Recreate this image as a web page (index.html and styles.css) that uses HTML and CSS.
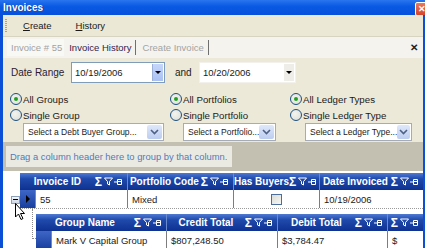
FILE: index.html
```html
<!DOCTYPE html>
<html lang="en">
<head>
    <meta charset="UTF-8">
    <title>Invoices</title>
    <link rel="stylesheet" href="styles.css">
</head>
<body>
<div class="window">
    <div class="top-strip"></div>
    <div class="titlebar">
        <span class="title">Invoices</span>
        <span class="close-btn">&#x2715;</span>
    </div>

    <div class="frame">
        <div class="menubar">
            <span class="grip"></span>
            <span class="menu-item"><u>C</u>reate</span>
            <span class="menu-item"><u>H</u>istory</span>
        </div>

        <div class="tabstrip">
            <span class="tab tab-off tab-first">Invoice # 55</span>
            <span class="tab tab-on">Invoice History</span>
            <span class="tab-sep"></span>
            <span class="tab tab-off tab-create">Create Invoice</span>
            <span class="tab-sep"></span>
            <span class="tab-close">&#x2715;</span>
        </div>

        <div class="filters">
            <div class="date-row">
                <span class="date-label">Date Range</span>
                <div class="date-box date-first">
                    <span class="date-text">10/19/2006</span>
                    <span class="date-drop"><span class="arrow-down"></span></span>
                </div>
                <span class="and">and</span>
                <div class="date-box date-second">
                    <span class="date-text">10/20/2006</span>
                    <span class="date-drop plain"><span class="arrow-down"></span></span>
                </div>
            </div>

            <div class="options">
                <div class="opt-col col-groups">
                    <div class="radio-row"><span class="radio checked"></span>All Groups</div>
                    <div class="radio-row"><span class="radio"></span>Single Group</div>
                    <div class="combo combo-groups"><span class="combo-text">Select a Debt Buyer Group...</span><span class="combo-btn"><svg width="9" height="6" viewBox="0 0 9 6"><path d="M1 1 L4.5 4.5 L8 1" fill="none" stroke="#4d6185" stroke-width="1.6"/></svg></span></div>
                </div>
                <div class="opt-col col-portfolios">
                    <div class="radio-row"><span class="radio checked"></span>All Portfolios</div>
                    <div class="radio-row"><span class="radio"></span>Single Portfolio</div>
                    <div class="combo combo-portfolios"><span class="combo-text">Select a Portfolio...</span><span class="combo-btn"><svg width="9" height="6" viewBox="0 0 9 6"><path d="M1 1 L4.5 4.5 L8 1" fill="none" stroke="#4d6185" stroke-width="1.6"/></svg></span></div>
                </div>
                <div class="opt-col col-ledger">
                    <div class="radio-row"><span class="radio checked"></span>All Ledger Types</div>
                    <div class="radio-row"><span class="radio"></span>Single Ledger Type</div>
                    <div class="combo combo-ledger"><span class="combo-text">Select a Ledger Type...</span><span class="combo-btn"><svg width="9" height="6" viewBox="0 0 9 6"><path d="M1 1 L4.5 4.5 L8 1" fill="none" stroke="#4d6185" stroke-width="1.6"/></svg></span></div>
                </div>
            </div>
        </div>

        <div class="groupby">
            <div class="groupby-box">Drag a column header here to group by that column.</div>
        </div>

        <div class="grid-area">
            <div class="band band-main">
                <div class="head-row">
                    <div class="hcell" style="width:108px"><span class="htext">Invoice ID</span><span class="hicons"><span class="sigma">&Sigma;</span><svg class="ficon" width="9" height="9" viewBox="0 0 9 9"><path d="M0.5 1 H8.5 L5.5 4.5 V8 L3.5 7 V4.5 Z" fill="none" stroke="#fff" stroke-width="1"/></svg><svg class="picon" width="8" height="8" viewBox="0 0 8 8"><path d="M0 4 H3 M3.5 1.5 H7.5 V6.5 H3.5 Z M3.5 3.5 H7.5" fill="none" stroke="#fff" stroke-width="1"/></svg></span></div>
                    <div class="hcell" style="width:106px"><span class="htext">Portfolio Code</span><span class="hicons"><span class="sigma">&Sigma;</span><svg class="ficon" width="9" height="9" viewBox="0 0 9 9"><path d="M0.5 1 H8.5 L5.5 4.5 V8 L3.5 7 V4.5 Z" fill="none" stroke="#fff" stroke-width="1"/></svg><svg class="picon" width="8" height="8" viewBox="0 0 8 8"><path d="M0 4 H3 M3.5 1.5 H7.5 V6.5 H3.5 Z M3.5 3.5 H7.5" fill="none" stroke="#fff" stroke-width="1"/></svg></span></div>
                    <div class="hcell" style="width:86px"><span class="htext">Has Buyers</span><span class="hicons"><span class="sigma">&Sigma;</span><svg class="ficon" width="9" height="9" viewBox="0 0 9 9"><path d="M0.5 1 H8.5 L5.5 4.5 V8 L3.5 7 V4.5 Z" fill="none" stroke="#fff" stroke-width="1"/></svg><svg class="picon" width="8" height="8" viewBox="0 0 8 8"><path d="M0 4 H3 M3.5 1.5 H7.5 V6.5 H3.5 Z M3.5 3.5 H7.5" fill="none" stroke="#fff" stroke-width="1"/></svg></span></div>
                    <div class="hcell last" style="width:103px"><span class="htext">Date Invoiced</span><span class="hicons"><span class="sigma">&Sigma;</span><svg class="ficon" width="9" height="9" viewBox="0 0 9 9"><path d="M0.5 1 H8.5 L5.5 4.5 V8 L3.5 7 V4.5 Z" fill="none" stroke="#fff" stroke-width="1"/></svg><svg class="picon" width="8" height="8" viewBox="0 0 8 8"><path d="M0 4 H3 M3.5 1.5 H7.5 V6.5 H3.5 Z M3.5 3.5 H7.5" fill="none" stroke="#fff" stroke-width="1"/></svg></span></div>
                </div>
                <div class="data-row">
                    <div class="selector"><span class="arrow-right"></span></div>
                    <div class="dcell" style="width:92px">55</div>
                    <div class="dcell" style="width:106px">Mixed</div>
                    <div class="dcell center" style="width:86px"><span class="checkbox"></span></div>
                    <div class="dcell last" style="width:103px">10/19/2006</div>
                </div>

                <span class="expander"></span>
                <span class="tree-line"></span>
                <svg class="cursor" width="11" height="18" viewBox="0 0 11 18"><path d="M0.5 0.5 V14 L3.5 11 L6 16.5 L8 15.5 L5.5 10.5 H9.5 Z" fill="#fff" stroke="#000" stroke-width="1"/></svg>
            </div>

            <div class="band band-child">
                <div class="head-row">
                    <div class="hcell" style="width:131px"><span class="htext">Group Name</span><span class="hicons"><span class="sigma">&Sigma;</span><svg class="ficon" width="9" height="9" viewBox="0 0 9 9"><path d="M0.5 1 H8.5 L5.5 4.5 V8 L3.5 7 V4.5 Z" fill="none" stroke="#fff" stroke-width="1"/></svg><svg class="picon" width="8" height="8" viewBox="0 0 8 8"><path d="M0 4 H3 M3.5 1.5 H7.5 V6.5 H3.5 Z M3.5 3.5 H7.5" fill="none" stroke="#fff" stroke-width="1"/></svg></span></div>
                    <div class="hcell" style="width:111px"><span class="htext">Credit Total</span><span class="hicons"><span class="sigma">&Sigma;</span><svg class="ficon" width="9" height="9" viewBox="0 0 9 9"><path d="M0.5 1 H8.5 L5.5 4.5 V8 L3.5 7 V4.5 Z" fill="none" stroke="#fff" stroke-width="1"/></svg><svg class="picon" width="8" height="8" viewBox="0 0 8 8"><path d="M0 4 H3 M3.5 1.5 H7.5 V6.5 H3.5 Z M3.5 3.5 H7.5" fill="none" stroke="#fff" stroke-width="1"/></svg></span></div>
                    <div class="hcell" style="width:110px"><span class="htext">Debit Total</span><span class="hicons"><span class="sigma">&Sigma;</span><svg class="ficon" width="9" height="9" viewBox="0 0 9 9"><path d="M0.5 1 H8.5 L5.5 4.5 V8 L3.5 7 V4.5 Z" fill="none" stroke="#fff" stroke-width="1"/></svg><svg class="picon" width="8" height="8" viewBox="0 0 8 8"><path d="M0 4 H3 M3.5 1.5 H7.5 V6.5 H3.5 Z M3.5 3.5 H7.5" fill="none" stroke="#fff" stroke-width="1"/></svg></span></div>
                    <div class="hcell last" style="width:35px"><span class="htext"></span><span class="hicons"><span class="sigma">&Sigma;</span><svg class="ficon" width="9" height="9" viewBox="0 0 9 9"><path d="M0.5 1 H8.5 L5.5 4.5 V8 L3.5 7 V4.5 Z" fill="none" stroke="#fff" stroke-width="1"/></svg><svg class="picon" width="8" height="8" viewBox="0 0 8 8"><path d="M0 4 H3 M3.5 1.5 H7.5 V6.5 H3.5 Z M3.5 3.5 H7.5" fill="none" stroke="#fff" stroke-width="1"/></svg></span></div>
                </div>
                <div class="data-row">
                    <div class="selector"></div>
                    <div class="dcell" style="width:115px">Mark V Capital Group</div>
                    <div class="dcell" style="width:111px">$807,248.50</div>
                    <div class="dcell" style="width:110px">$3,784.47</div>
                    <div class="dcell last" style="width:35px">$</div>
                </div>
            </div>
        </div>
    </div>
</div>
</body>
</html>
```

FILE: styles.css
```css
body {
    margin: 0;
    padding: 0;
    font-family: "Liberation Sans", Arial, sans-serif;
    font-size: 10px;
    color: #1a1a1a;
    background-color: #ece9d8;
}

.window {
    width: 425px;
    height: 248px;
    overflow: hidden;
    display: flex;
    flex-direction: column;
}

.top-strip {
    height: 2px;
    background-color: #e4e9f2;
}

/* XP style caption */
.titlebar {
    height: 15px;
    display: flex;
    align-items: center;
    justify-content: space-between;
    background: linear-gradient(#2a76ee, #0a5ae4 40%, #0650dc);
    color: white;
}

.title {
    font-weight: bold;
    font-size: 10px;
    padding-left: 3px;
    text-shadow: 1px 0 0 #0a3a9a;
}

.close-btn {
    width: 12px;
    height: 12px;
    margin-right: -4px;
    margin-top: 3px;
    border: 1px solid #fff;
    border-radius: 2px;
    background: linear-gradient(#e8795b, #d5452a);
    color: white;
    font-size: 9px;
    font-weight: bold;
    line-height: 12px;
    text-align: center;
}

.frame {
    flex: 1;
    display: flex;
    flex-direction: column;
    border-left: 3px solid #0b4fd6;
    border-right: 2px solid #0b4fd6;
    background-color: #ece9d8;
}

.menubar {
    height: 21px;
    display: flex;
    align-items: center;
    background-color: #ebe8d6;
    border-bottom: 1px solid #d8d4c2;
    font-size: 9.5px;
}

.grip {
    width: 2px;
    height: 13px;
    margin-left: 2px;
    margin-right: 16px;
    background: repeating-linear-gradient(#a8a594 0 1px, transparent 1px 2px);
}

.menu-item {
    margin-right: 24px;
}

.tabstrip {
    height: 21px;
    display: flex;
    align-items: center;
    background-color: #f4f3ee;
    font-size: 9.5px;
}

.tab {
    padding: 0 3px;
}

.tab-first {
    margin-left: 4px;
    padding: 3px 2px 3px 4px;
    background-color: #f8f8f5;
}

.tab-off {
    color: #a3a3a3;
}

.tab-on {
    color: #3a1a48;
    padding-left: 5px;
    padding-right: 3px;
}

.tab-create {
    padding-left: 5px;
    padding-right: 4px;
}

.tab-sep {
    width: 1px;
    height: 15px;
    background-color: #6f6f6f;
    margin: 0 2px 0 0;
}

.tab-close {
    margin-left: auto;
    margin-right: 5px;
    font-size: 10px;
    font-weight: bold;
    color: #222;
}

.filters {
    padding: 4px 0 0 0;
}

.date-row {
    display: flex;
    align-items: center;
    height: 21px;
    font-size: 10px;
}

.date-label {
    width: 60px;
    padding-left: 8px;
    color: #2b1a30;
}

.date-box {
    height: 19px;
    display: flex;
    align-items: center;
    justify-content: space-between;
    background-color: white;
    font-size: 9.5px;
}

.date-first {
    width: 92px;
    border: 1px solid #7f9db9;
}

.date-second {
    width: 95px;
    border: 1px solid #f2f1ec;
}

.date-text {
    padding-left: 3px;
}

.date-drop {
    width: 10px;
    height: 17px;
    margin-right: 1px;
    display: flex;
    align-items: center;
    justify-content: center;
    background: linear-gradient(#c6d6fb, #a9c1f2);
    border-left: 1px solid #9db0d8;
}

.date-drop.plain {
    background: #eeede8;
    border-left: none;
}

.arrow-down {
    width: 0;
    height: 0;
    border-left: 3px solid transparent;
    border-right: 3px solid transparent;
    border-top: 3px solid #000;
}

.and {
    width: 24px;
    padding-left: 10px;
}

.options {
    display: grid;
    grid-template-columns: 160px 120px 1fr;
    margin-top: 8px;
    padding-left: 7px;
}

.radio-row {
    height: 16px;
    display: flex;
    align-items: center;
    font-size: 9.7px;
}

.radio {
    width: 10px;
    height: 10px;
    border: 1px solid #1c5180;
    border-radius: 50%;
    background: radial-gradient(circle at 40% 40%, #f4f4f0, #dcdcd4);
    margin-right: 1px;
    position: relative;
}

.radio.checked::after {
    content: "";
    position: absolute;
    left: 3px;
    top: 3px;
    width: 4px;
    height: 4px;
    border-radius: 50%;
    background-color: #21a121;
}

.combo {
    height: 16px;
    display: flex;
    align-items: center;
    justify-content: space-between;
    border: 1px solid #a5acb5;
    background-color: white;
    font-size: 8.5px;
}

.combo-groups {
    width: 139px;
    margin-left: 13px;
}

.combo-portfolios {
    width: 91px;
    margin-left: 13px;
}

.combo-ledger {
    width: 105px;
    margin-left: 15px;
}

.combo-text {
    padding-left: 4px;
    white-space: nowrap;
}

.combo-btn {
    width: 15px;
    height: 14px;
    margin-right: 1px;
    display: flex;
    align-items: center;
    justify-content: center;
    background: linear-gradient(#dfe8fb, #bccdef);
    border-radius: 2px;
}

.groupby {
    margin-top: 1px;
    height: 29px;
    background-color: #c4c0b1;
    display: flex;
    align-items: center;
}

.groupby-box {
    margin-left: 3px;
    width: 222px;
    height: 21px;
    line-height: 21px;
    padding-left: 4px;
    background-color: #ebeae2;
    color: #5479b9;
    font-size: 9.4px;
    white-space: nowrap;
}

.grid-area {
    flex: 1;
    background-color: white;
    padding-top: 2px;
}

.band {
    position: relative;
}

.band-main {
    margin-left: 17px;
}

.band-child {
    margin-left: 33px;
    margin-top: 5px;
}

.head-row {
    display: flex;
    height: 17px;
}

.hcell {
    display: flex;
    align-items: center;
    background: linear-gradient(#5079d2, #1f4aac 35%, #0e3191);
    border-right: 1px solid #6a8ad0;
    box-sizing: border-box;
    color: white;
    font-weight: bold;
    font-size: 10px;
}

.hcell.last {
    border-right: none;
}

.htext {
    flex: 1;
    text-align: center;
    white-space: nowrap;
}

.hicons {
    display: flex;
    align-items: center;
    gap: 1px;
    padding-right: 5px;
}

.sigma {
    font-size: 12px;
    line-height: 12px;
    margin-right: 1px;
}

.data-row {
    display: flex;
    height: 18px;
    border-bottom: 1px dotted #9a9a9a;
}

.selector {
    width: 16px;
    display: flex;
    align-items: center;
    justify-content: center;
    background: linear-gradient(#3e66c6, #183f9e);
    box-sizing: border-box;
    border-right: 1px solid #6a8ad0;
}

.arrow-right {
    width: 0;
    height: 0;
    border-top: 4px solid transparent;
    border-bottom: 4px solid transparent;
    border-left: 4px solid #000;
}

.dcell {
    display: flex;
    align-items: center;
    padding-left: 4px;
    box-sizing: border-box;
    border-right: 1px solid #7d7d7d;
    font-size: 9.5px;
    white-space: nowrap;
}

.dcell.last {
    border-right: none;
}

.dcell.center {
    justify-content: center;
    padding-left: 0;
}

.checkbox {
    width: 9px;
    height: 9px;
    border: 1px solid #4a6f9c;
    background: linear-gradient(135deg, #dcdcd6, #f6f6f4);
}

/* tree expander and connector lines drawn over the grid margin */
.expander {
    position: absolute;
    left: -9px;
    top: 23px;
    width: 7px;
    height: 6px;
    border: 1px solid #8c9fb8;
    background: linear-gradient(#f4f6fa, #cfd8e6);
}

.expander::after {
    content: "";
    position: absolute;
    left: 1px;
    top: 2px;
    width: 5px;
    height: 1px;
    background-color: #000;
}

.tree-line {
    position: absolute;
    left: 12px;
    top: 36px;
    width: 7px;
    height: 29px;
    border-left: 1px dotted #8a8a8a;
    border-bottom: 1px dotted #8a8a8a;
}

.cursor {
    position: absolute;
    left: -5px;
    top: 30px;
}
```
